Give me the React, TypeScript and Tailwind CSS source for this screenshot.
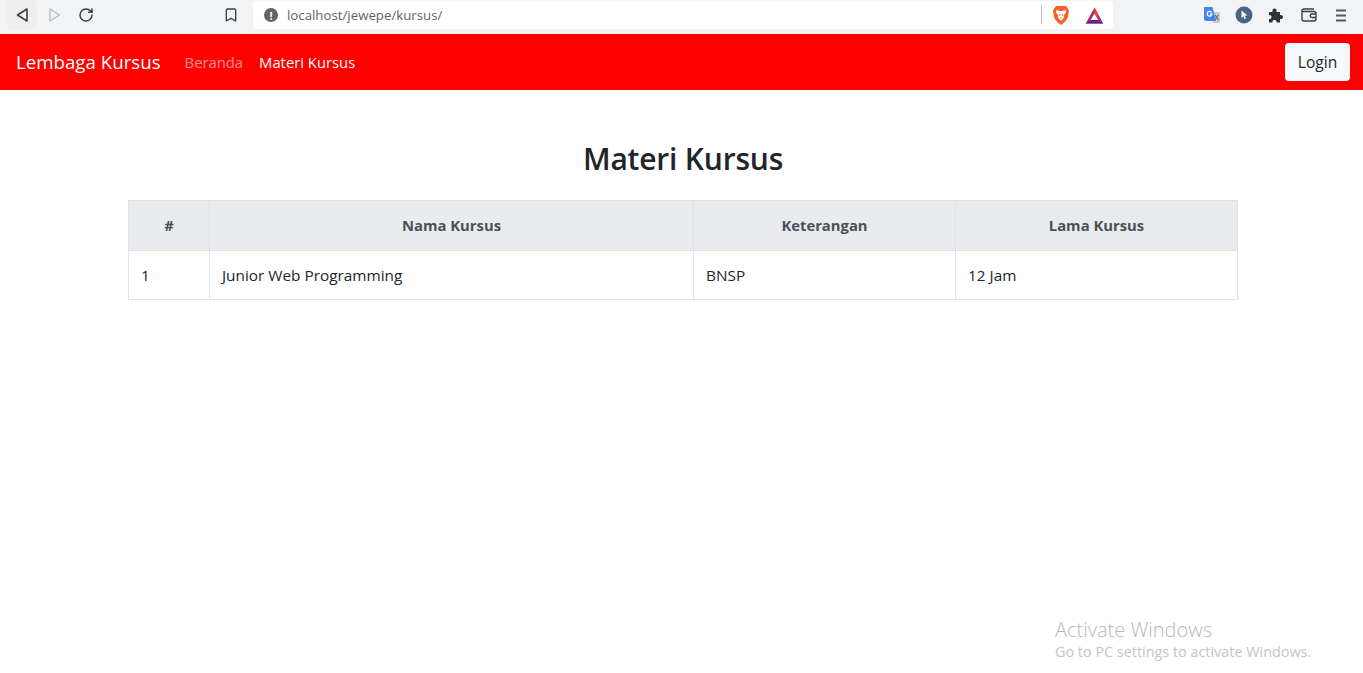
import { Bookmark, RotateCw } from "lucide-react";

const font = "font-['Open_Sans','Noto_Sans',sans-serif]";

function BrowserBar() {
  return (
    <div className="flex h-[34px] items-center bg-[#f1f3f4] pb-[4px]">
      <div className="flex w-[253px] items-center">
        <span className="ml-[7px] flex h-[30px] w-[30px] items-center justify-center rounded-sm bg-[#eeeeee]">
          <svg width="14" height="16" viewBox="0 0 14 16" fill="none" stroke="#3c4043" strokeWidth="1.6" strokeLinejoin="round">
            <path d="M12 2 L2.5 8 L12 14 Z" />
          </svg>
        </span>
        <span className="ml-[11px]">
          <svg width="14" height="16" viewBox="0 0 14 16" fill="none" stroke="#b9bbbe" strokeWidth="1.4" strokeLinejoin="round">
            <path d="M2 2 L11.5 8 L2 14 Z" />
          </svg>
        </span>
        <RotateCw size={16} strokeWidth={2.2} className="ml-[16px] text-[#3c4043]" />
        <Bookmark size={16} strokeWidth={2} className="ml-[129px] text-[#3c4043]" />
        <span className="flex-1" />
      </div>
      <div className="flex h-[28px] w-[860px] items-center rounded-[3px] bg-white">
        <span className="ml-[11px] flex h-[14px] w-[14px] items-center justify-center rounded-full bg-[#5f6368] text-[11px] font-bold leading-none text-white">!</span>
        <span className={`ml-[9px] pt-px text-[13.25px] text-[#5f6368] ${font}`}>localhost/jewepe/kursus/</span>
        <span className="ml-auto h-[18px] w-px bg-[#b6b9bd]" />
        <svg className="ml-[10px]" width="18" height="21" viewBox="0 0 18 21">
          <path d="M4 1 H14 L16 3.5 L17 6 L16 12 C15 15 12 18 9 20 C6 18 3 15 2 12 L1 6 L2 3.5 Z" fill="#f0652b" />
          <path d="M4.5 5 L7.5 6 H10.5 L13.5 5 L14 7.5 L11.5 10.5 L12 12.5 L9 16 L6 12.5 L6.5 10.5 L4 7.5 Z" fill="#fff" />
          <path d="M7 8.5 L8.5 9.5 L7.5 11 Z M11 8.5 L9.5 9.5 L10.5 11 Z M8 12.5 H10 L9 14 Z" fill="#f0652b" />
        </svg>
        <svg className="ml-[15px] mr-[9px]" width="19" height="17" viewBox="0 0 18 17">
          <path d="M9 0.5 L17.8 16.5 H0.2 Z M9 6.5 L5.2 13 H12.8 Z" fillRule="evenodd" fill="#a5307e" />
          <path d="M9 0.5 L13 8 L11 9.8 L9 6.5 Z" fill="#e8482c" />
          <path d="M0.2 16.5 L5.2 13 H12.8 L17.8 16.5 Z" fill="#62288c" />
        </svg>
      </div>
      <div className="flex flex-1 items-center">
        <svg className="ml-[90px]" width="18" height="18" viewBox="0 0 18 18">
          <path d="M9 6 H17 V17 H10 Z" fill="#c9cbce" />
          <path d="M12 9 L15.5 14 M15.5 9 L12 14" stroke="#6b6f73" strokeWidth="1.1" />
          <path d="M1 1 H9.5 L13 15 H3 C2 15 1 14 1 13 Z" fill="#4285f4" />
          <path d="M8.6 6.4 A2.4 2.4 0 1 0 9 8.2 H6.8" fill="none" stroke="#fff" strokeWidth="1.2" />
        </svg>
        <svg className="ml-[14px]" width="18" height="18" viewBox="0 0 18 18">
          <circle cx="9" cy="9" r="8.5" fill="#4b6587" />
          <path d="M6.5 4.5 L12.5 9.5 H9.8 L11 12.5 L9.5 13 L8.3 10.2 L6.5 12 Z" fill="#fff" />
        </svg>
        <svg className="ml-[15px]" width="15" height="15" viewBox="0 0 15 15">
          <path d="M1 4 H4.5 C4.2 1.5 5 0.5 6.5 0.5 C8 0.5 8.8 1.5 8.5 4 H12 V7 C14 6.7 15 7.5 15 9 C15 10.5 14 11.3 12 11 V14.5 H8.5 C8.8 12.8 8 12 6.5 12 C5 12 4.2 12.8 4.5 14.5 H1 V11 C2.5 11.2 3.5 10.3 3.5 9 C3.5 7.7 2.5 6.8 1 7 Z" fill="#303336" />
        </svg>
        <svg className="ml-[18px]" width="16" height="14" viewBox="0 0 16 14" fill="none" stroke="#3c4043" strokeWidth="1.4">
          <path d="M13 1 H3 A2 2 0 0 0 1 3 V11 A2 2 0 0 0 3 13 H13 A2 2 0 0 0 15 11 V5 A2 2 0 0 0 13 3.5 H1.5" />
          <path d="M15 6 H11 A1.5 1.5 0 0 0 11 9.5 H15" />
        </svg>
        <svg className="ml-[19px]" width="10" height="13" viewBox="0 0 10 13" stroke="#55585c" strokeWidth="1.8">
          <path d="M0 1.5 H10 M0 6.5 H10 M0 11.5 H10" />
        </svg>
      </div>
    </div>
  );
}

function Navbar() {
  return (
    <nav className={`flex h-[56px] items-center justify-between bg-[#ff0000] pl-4 pr-[13px] ${font}`}>
      <div className="flex items-center">
        <span className="text-[18.7px] text-white">Lembaga Kursus</span>
        <span className="ml-[24px] pt-px text-[14.8px] text-white/55">Beranda</span>
        <span className="ml-[16px] pt-px text-[14.8px] text-white">Materi Kursus</span>
      </div>
      <button className="h-[38px] w-[65px] rounded-[4px] bg-[#f8f9fa] pt-px text-[15.6px] text-[#212529]">Login</button>
    </nav>
  );
}

function CourseTable() {
  const thClass = "border border-[#dee2e6] bg-[#e9ecef] text-center text-[14.8px] font-bold text-[#495057]";
  const tdClass = "border border-[#dee2e6] px-3 pt-px text-left text-[15.35px] font-normal text-[#212529]";
  return (
    <table className="ml-[128px] w-[1109px] table-fixed border-collapse">
      <colgroup>
        <col className="w-[81px]" />
        <col className="w-[484px]" />
        <col className="w-[262px]" />
        <col className="w-[282px]" />
      </colgroup>
      <thead>
        <tr className="h-[50px]">
          <th className={thClass}>#</th>
          <th className={thClass}>Nama Kursus</th>
          <th className={thClass}>Keterangan</th>
          <th className={thClass}>Lama Kursus</th>
        </tr>
      </thead>
      <tbody>
        <tr className="h-[49px]">
          <td className={tdClass}>1</td>
          <td className={tdClass}>Junior Web Programming</td>
          <td className={tdClass}>BNSP</td>
          <td className={tdClass}>12 Jam</td>
        </tr>
      </tbody>
    </table>
  );
}

export default function App() {
  return (
    <div className="relative h-[673px] overflow-hidden bg-white">
      <BrowserBar />
      <Navbar />
      <main className={`pt-[46px] ${font}`}>
        <h1 className="mb-[19px] pl-[3px] text-center text-[30px] leading-[45px] font-semibold tracking-[-0.2px] text-[#212529]">Materi Kursus</h1>
        <CourseTable />
      </main>
      {/* windows watermark sits over the page */}
      <div className={`absolute left-[1055px] top-[617px] text-[#c4c4c4] ${font}`}>
        <p className="text-[20px] leading-[25px] font-light text-[#b8b8b8]">Activate Windows</p>
        <p className="text-[14.4px] leading-[20px] font-normal">Go to PC settings to activate Windows.</p>
      </div>
    </div>
  );
}
